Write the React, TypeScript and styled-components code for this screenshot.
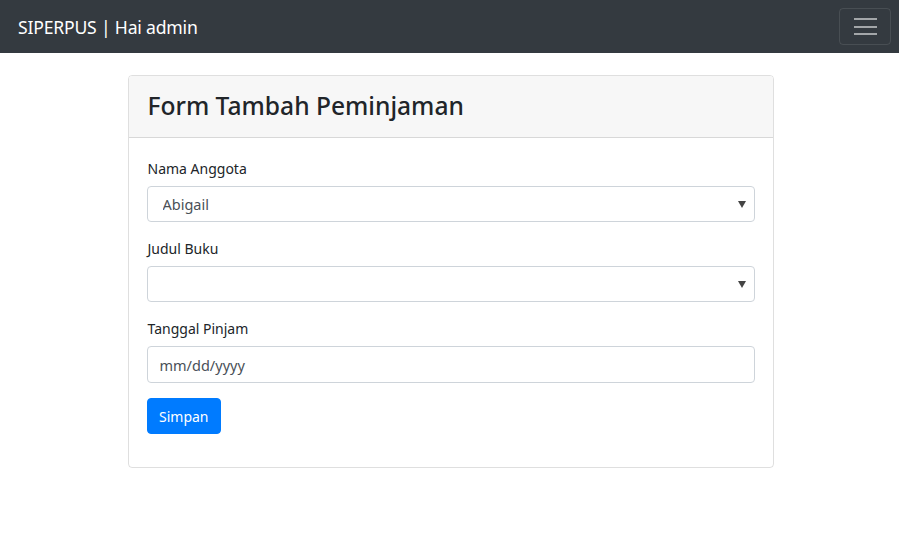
import React from "react";
import styled, { createGlobalStyle } from "styled-components";

const Global = createGlobalStyle`
  html, body { margin: 0; padding: 0; background: #fff; }
  body { font-family: "Noto Sans", "Open Sans", Arial, sans-serif; color: #212529; }
  * { box-sizing: border-box; }
`;

const Navbar = styled.nav`
  height: 53px;
  background: #343a40;
  display: flex;
  align-items: center;
  justify-content: space-between;
  padding: 0 8px 0 18px;
`;

const Brand = styled.a`
  color: #fff;
  font-size: 17.6px;
  letter-spacing: -0.2px;
  text-decoration: none;
`;

const Toggler = styled.button`
  width: 52px;
  height: 37px;
  border: 1px solid rgba(255, 255, 255, 0.1);
  border-radius: 4px;
  background: transparent;
  display: flex;
  flex-direction: column;
  align-items: center;
  justify-content: center;
  gap: 5.5px;
  padding: 0;
`;

const Bar = styled.span`
  display: block;
  width: 23px;
  height: 2px;
  background: rgba(255, 255, 255, 0.55);
`;

const Container = styled.main`
  display: flex;
  justify-content: center;
  padding: 22px 0 0 2px;
`;

const Card = styled.section`
  width: 646px;
  border: 1px solid rgba(0, 0, 0, 0.125);
  border-radius: 4px;
  overflow: hidden;
`;

const CardHeader = styled.header`
  background: #f7f7f7;
  border-bottom: 1px solid rgba(0, 0, 0, 0.125);
  padding: 12px 19px 13px;
`;

const Title = styled.h3`
  margin: 0;
  font-size: 24.6px;
  line-height: 36px;
  font-weight: 500;
  color: #212529;
`;

const CardBody = styled.form`
  padding: 20px 18px 33px 18px;
`;

const Group = styled.div`
  margin-bottom: 16px;
`;

const Label = styled.label`
  display: block;
  font-size: 14px;
  line-height: 21px;
  margin-bottom: 7px;
  padding-left: 1px;
  color: #212529;
`;

const Select = styled.select`
  width: 100%;
  height: 36px;
  border: 1px solid #ced4da;
  border-radius: 4px;
  background: #fff
    url("data:image/svg+xml;utf8,<svg xmlns='http://www.w3.org/2000/svg' width='8' height='7'><path d='M0 0h8L4 7z' fill='%23444'/></svg>")
    no-repeat right 8px center;
  appearance: none;
  -webkit-appearance: none;
  padding: 0 24px 0 15px;
  font-family: inherit;
  font-size: 14.5px;
  color: #495057;
`;

const Input = styled.input`
  width: 100%;
  height: 37px;
  border: 1px solid #ced4da;
  border-radius: 4px;
  padding: 0 12px;
  font-family: inherit;
  font-size: 14.5px;
  color: #495057;
  &::placeholder { color: #495057; }
`;

const LastGroup = styled(Group)`
  margin-bottom: 15px;
`;

const Button = styled.button`
  height: 36px;
  padding: 0 11.5px;
  background: #007bff;
  color: #fff;
  border: 1px solid #007bff;
  border-radius: 4px;
  font-family: inherit;
  font-size: 14px;
`;

export default function App() {
  return (
    <>
      <Global />
      <Navbar>
        <Brand href="#">SIPERPUS | Hai admin</Brand>
        <Toggler type="button" aria-label="menu">
          <Bar />
          <Bar />
          <Bar />
        </Toggler>
      </Navbar>
      <Container>
        <Card>
          <CardHeader>
            <Title>Form Tambah Peminjaman</Title>
          </CardHeader>
          <CardBody onSubmit={(e) => e.preventDefault()}>
            <Group>
              <Label>Nama Anggota</Label>
              <Select defaultValue="Abigail">
                <option>Abigail</option>
              </Select>
            </Group>
            <Group>
              <Label>Judul Buku</Label>
              <Select defaultValue="">
                <option value=""></option>
              </Select>
            </Group>
            <LastGroup>
              <Label>Tanggal Pinjam</Label>
              <Input type="text" placeholder="mm/dd/yyyy" />
            </LastGroup>
            <Button type="submit">Simpan</Button>
          </CardBody>
        </Card>
      </Container>
    </>
  );
}
